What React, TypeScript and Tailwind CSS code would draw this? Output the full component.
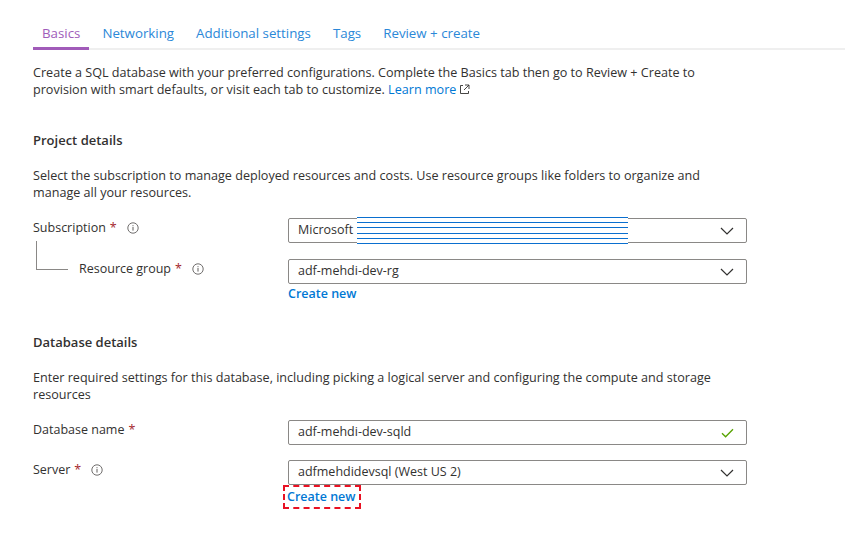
import React from 'react';

const font = { fontFamily: '"Open Sans", "Noto Sans", sans-serif' };

const Info = () => (
    <svg width="12" height="12" viewBox="0 0 12 12" className="ml-[10px] shrink-0">
        <circle cx="6" cy="6" r="5.2" fill="none" stroke="#605e5c" strokeWidth="0.9" />
        <rect x="5.5" y="5" width="1" height="3.6" fill="#605e5c" />
        <rect x="5.5" y="3.2" width="1" height="1" fill="#605e5c" />
    </svg>
);

const Chevron = () => (
    <svg width="14" height="8" viewBox="0 0 14 8" className="shrink-0">
        <path d="M1 1 L7 7 L13 1" fill="none" stroke="#323130" strokeWidth="1.2" />
    </svg>
);

const Check = () => (
    <svg width="13" height="10" viewBox="0 0 13 10" className="shrink-0">
        <path d="M1 5.2 L4.6 8.8 L12 1.2" fill="none" stroke="#57a300" strokeWidth="1.3" />
    </svg>
);

const Req = () => <span className="text-[#a4262c] ml-[4px]">*</span>;

const Field = ({ value, right }: { value: string; right: React.ReactNode }) => (
    <div className="h-[25px] w-[459px] border border-[#8a8886] rounded-[2px] flex items-center justify-between pl-[9px] pr-[12px] text-[12.5px] text-[#323130]">
        <span>{value}</span>
        {right}
    </div>
);

const App = () => {
    const tabs = ['Basics', 'Networking', 'Additional settings', 'Tags', 'Review + create'];

    return (
        <div className="min-h-screen bg-white pl-[33px] pt-[24px]" style={font}>
            {/* Tabs */}
            <div className="flex gap-[4px] border-b-2 border-[#efefef]">
                {tabs.map((t, i) => (
                    <div
                        key={t}
                        className={`px-[9px] pb-[5px] text-[13.3px] leading-[18px] -mb-[2px] border-b-[3px] ${i === 0 ? 'text-[#a05dba] border-[#a15bb9]' : 'text-[#2b88d8] border-transparent'}`}
                    >
                        {t}
                    </div>
                ))}
            </div>

            <p className="mt-[14px] text-[12.6px] leading-[17px] text-[#323130]">
                Create a SQL database with your preferred configurations. Complete the Basics tab then go to Review + Create to
                <br />
                provision with smart defaults, or visit each tab to customize.{' '}
                <span className="text-[#0078d4]">Learn more</span>
                <svg width="11" height="11" viewBox="0 0 11 11" className="inline-block ml-[3px] -mt-[3px]">
                    <path d="M4 1.5 H1.5 V9.5 H9.5 V7 M6 1 H10 V5 M10 1 L5 6" fill="none" stroke="#323130" strokeWidth="0.9" />
                </svg>
            </p>

            {/* Project details */}
            <h2 className="mt-[33px] text-[13px] leading-[18px] font-semibold text-[#323130]">Project details</h2>
            <p className="mt-[18px] text-[12.6px] leading-[17px] text-[#323130]">
                Select the subscription to manage deployed resources and costs. Use resource groups like folders to organize and
                <br />
                manage all your resources.
            </p>

            <div className="mt-[17px] flex items-start">
                <div className="w-[255px] flex items-center pt-[1px] text-[12.5px] leading-[18px] text-[#323130]">
                    Subscription<Req /><Info />
                </div>
                <div className="relative">
                    <Field value="Microsoft" right={<Chevron />} />
                    <div className="absolute left-[69px] top-[-1px] w-[271px] h-[27px] bg-white flex flex-col justify-between">
                        {[0, 1, 2, 3, 4, 5].map((n) => (
                            <div key={n} className="h-px bg-[#0a6fcf]" />
                        ))}
                    </div>
                </div>
            </div>

            <div className="mt-[16px] flex items-start">
                <div className="w-[255px] flex items-center pt-[1px] text-[12.5px] leading-[18px] text-[#323130]">
                    <div className="relative w-[46px] self-stretch">
                        <div className="absolute left-[3px] top-[-19px] w-[32px] h-[29px] border-l border-b border-[#8a8886]" />
                    </div>
                    Resource group<Req /><Info />
                </div>
                <div>
                    <Field value="adf-mehdi-dev-rg" right={<Chevron />} />
                    <div className="mt-[2px] text-[12.5px] leading-[16px] font-semibold text-[#0078d4]">Create new</div>
                </div>
            </div>

            {/* Database details */}
            <h2 className="mt-[31px] text-[13px] leading-[18px] font-semibold text-[#323130]">Database details</h2>
            <p className="mt-[18px] text-[12.6px] leading-[17px] text-[#323130]">
                Enter required settings for this database, including picking a logical server and configuring the compute and storage
                <br />
                resources
            </p>

            <div className="mt-[17px] flex items-start">
                <div className="w-[255px] flex items-center pt-[1px] text-[12.5px] leading-[18px] text-[#323130]">
                    Database name<Req />
                </div>
                <Field value="adf-mehdi-dev-sqld" right={<Check />} />
            </div>

            <div className="mt-[15px] flex items-start">
                <div className="w-[255px] flex items-center pt-[1px] text-[12.5px] leading-[18px] text-[#323130]">
                    Server<Req /><Info />
                </div>
                <div>
                    <Field value="adfmehdidevsql (West US 2)" right={<Chevron />} />
                    <div className="-ml-[5px] w-[78px] h-[24px] border-2 border-dashed border-[#e81123] flex items-center pl-[2px] text-[12.5px] font-semibold text-[#0078d4]">
                        Create new
                    </div>
                </div>
            </div>
        </div>
    );
};

export default App;
